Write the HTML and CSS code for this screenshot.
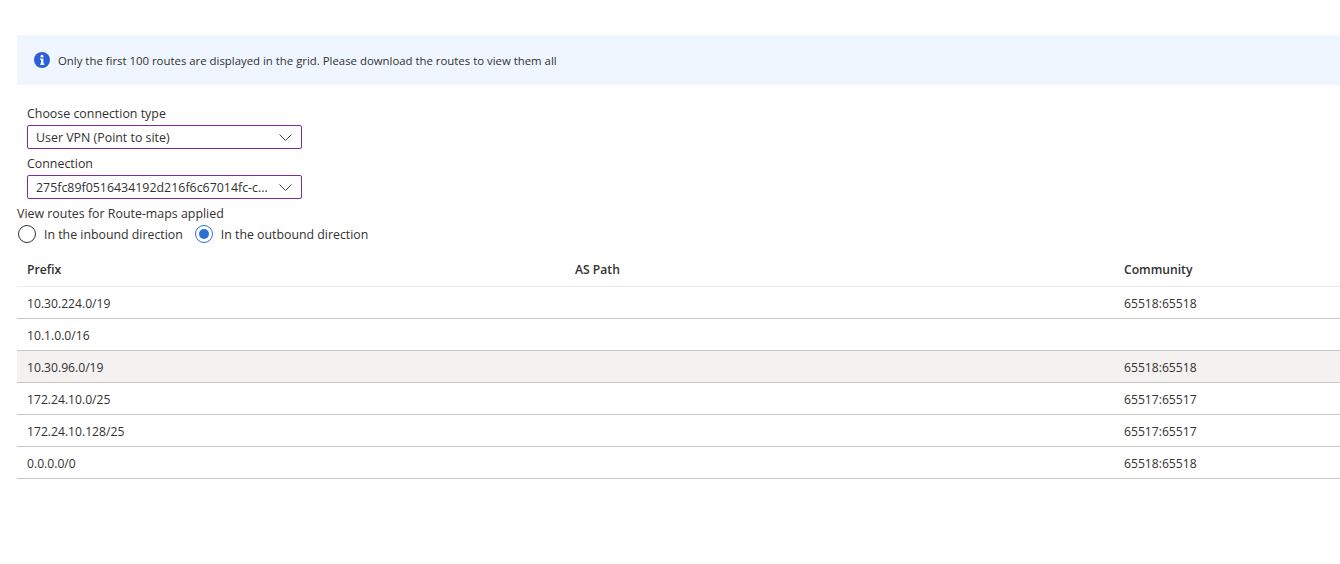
FILE: index.html
```html
<!DOCTYPE html>
<html lang="en">
<head>
<meta charset="utf-8">
<title>Routes</title>
<link rel="stylesheet" href="styles.css">
</head>
<body>
<main class="page">
  <div class="banner">
    <svg class="info" width="16" height="16" viewBox="0 0 16 16"><circle cx="8" cy="8" r="8" fill="#2b5fd9"/><rect x="7" y="6.6" width="2.4" height="6" fill="#fff"/><rect x="6" y="6.6" width="2" height="1.2" fill="#fff"/><rect x="6" y="11.6" width="4.4" height="1.2" fill="#fff"/><circle cx="8" cy="4.2" r="1.4" fill="#fff"/></svg>
    <span>Only the first 100 routes are displayed in the grid. Please download the routes to view them all</span>
  </div>
  <div class="fields">
    <div class="label">Choose connection type</div>
    <div class="select"><span class="value">User VPN (Point to site)</span><svg class="chev" width="13" height="7" viewBox="0 0 13 7"><path d="M.5.5l6 6 6-6" fill="none" stroke="#444" stroke-width="1"/></svg></div>
    <div class="label label-second">Connection</div>
    <div class="select"><span class="value">275fc89f0516434192d216f6c67014fc-c...</span><svg class="chev" width="13" height="7" viewBox="0 0 13 7"><path d="M.5.5l6 6 6-6" fill="none" stroke="#444" stroke-width="1"/></svg></div>
  </div>
  <div class="view-title">View routes for Route-maps applied</div>
  <div class="radios">
    <label class="radio"><span class="dot"></span>In the inbound direction</label>
    <label class="radio"><span class="dot on"></span>In the outbound direction</label>
  </div>
  <div class="grid">
    <div class="row head"><div>Prefix</div><div>AS Path</div><div>Community</div></div>
    <div class="row"><div>10.30.224.0/19</div><div></div><div>65518:65518</div></div>
    <div class="row"><div>10.1.0.0/16</div><div></div><div></div></div>
    <div class="row hover"><div>10.30.96.0/19</div><div></div><div>65518:65518</div></div>
    <div class="row"><div>172.24.10.0/25</div><div></div><div>65517:65517</div></div>
    <div class="row"><div>172.24.10.128/25</div><div></div><div>65517:65517</div></div>
    <div class="row"><div>0.0.0.0/0</div><div></div><div>65518:65518</div></div>
  </div>
</main>
</body>
</html>
```
FILE: styles.css
```css
* { box-sizing: border-box; }
html, body { margin: 0; padding: 0; background: #fff; overflow: hidden; }
body { font-family: "Open Sans", "Noto Sans", sans-serif; font-size: 12.4px; color: #323130; }
.page { padding: 35px 0 0 17px; }
.banner { height: 50px; background: #f0f6ff; display: flex; align-items: center; gap: 8px; padding-left: 17px; font-size: 11.38px; }
.info { flex: none; }
.fields { padding: 19px 0 0 10px; }
.label { height: 21px; line-height: 20px; }
.label-second { margin-top: 4px; height: 22px; line-height: 22px; }
.select { width: 275px; height: 24px; border: 1px solid #7f2a9e; border-radius: 2px; display: flex; align-items: center; justify-content: space-between; padding: 0 9px 0 8px; }
.chev { flex: none; }
.view-title { margin-top: 4px; height: 20px; line-height: 22px; }
.radios { display: flex; gap: 11px; margin-top: 1px; }
.radio { display: flex; align-items: center; gap: 8px; height: 20px; font-size: 12.33px; }
.dot { width: 18px; height: 18px; border-radius: 50%; border: 1px solid #323130; position: relative; margin-left: 1px; }
.dot.on { border-color: #2b6fd6; }
.dot.on::after { content: ""; position: absolute; left: 3px; top: 3px; width: 10px; height: 10px; border-radius: 50%; background: #2b6fd6; }
.grid { margin-top: 11px; font-size: 12.15px; }
.row { display: grid; grid-template-columns: 548px 549px 1fr; height: 32px; align-items: center; border-bottom: 1px solid #c8c6c4; padding: 1px 0 0 10px; }
.head { font-weight: 600; border-bottom-color: #edebe9; padding: 0 0 3px 10px; }
.hover { background: #f3f2f1; }
```
